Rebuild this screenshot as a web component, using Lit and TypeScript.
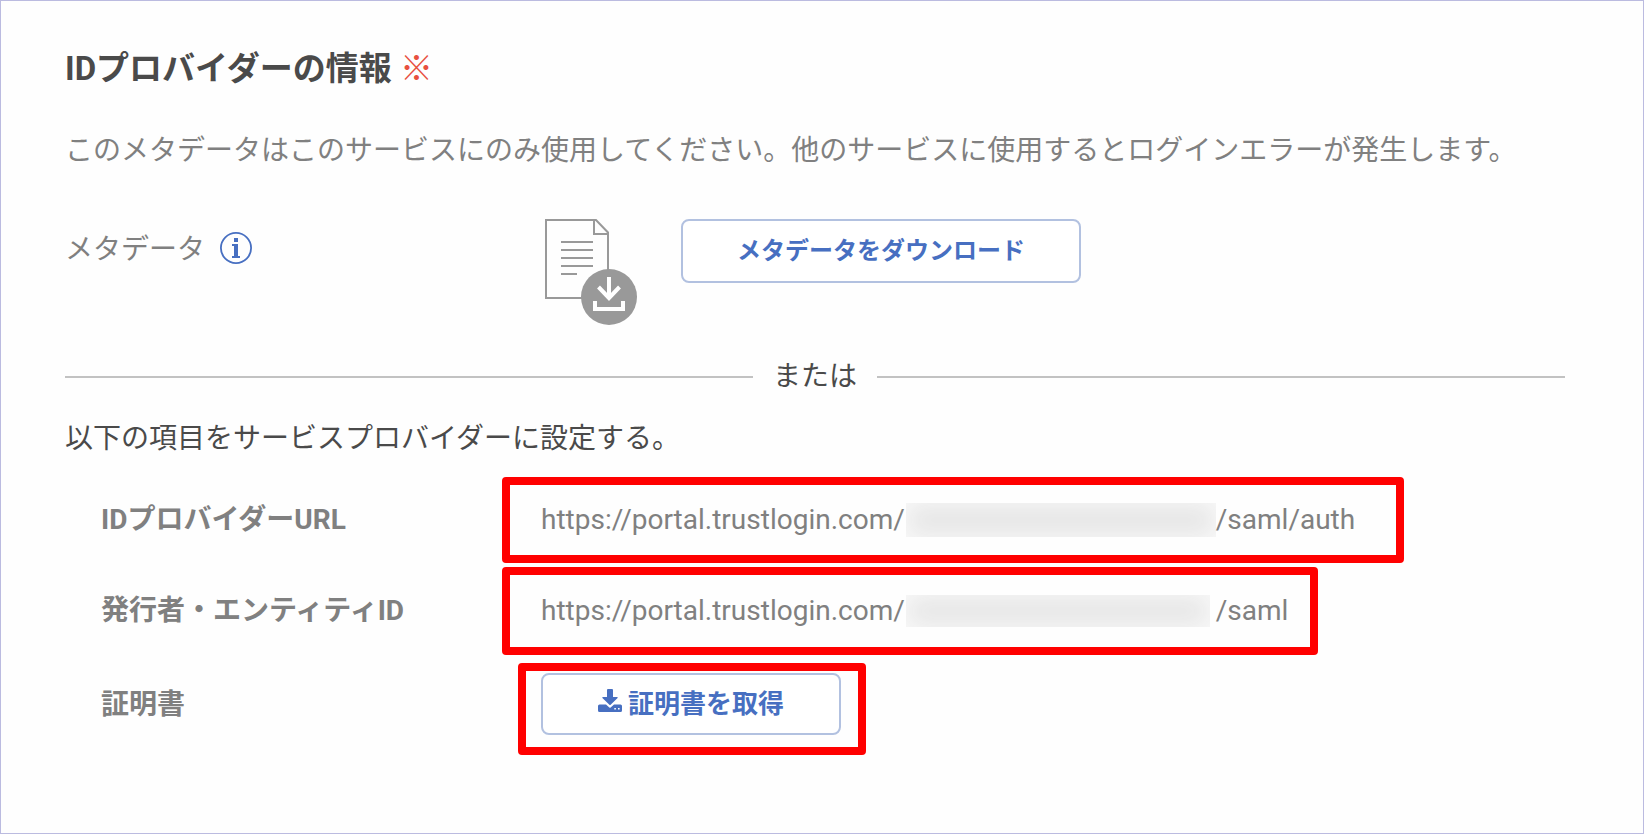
import { LitElement, html, css } from "lit";
import { customElement } from "lit/decorators.js";

const infoIcon = html`<svg width="32" height="32" viewBox="0 0 32 32" aria-hidden="true">
  <circle cx="16" cy="16" r="15.1" fill="none" stroke="#476fc1" stroke-width="1.8" />
  <path fill="#476fc1" d="M14 6h4v4h-4zM12 12h6v12h2v2h-8v-2h2v-10h-2z" />
</svg>`;

const fileIcon = html`<svg width="92" height="106" viewBox="0 0 92 106" aria-hidden="true">
  <g fill="none" stroke="#999" stroke-width="2">
    <path d="M1 1H51L63 13.500V79H1Z" />
    <path d="M49 1V15H63" />
    <path d="M16 23H48M16 31H48M16 39H48M16 47H48M16 55H32" />
  </g>
  <circle cx="64" cy="78" r="28" fill="#999" />
  <path fill="none" stroke="#fff" stroke-width="4" d="M64 58V79M53.500 68L64 79L74.500 68M50 82V90H78V82" />
</svg>`;

const downloadIcon = html`<svg width="24" height="24" viewBox="0 0 24 24" aria-hidden="true">
  <path fill="#476fc1" d="M10 0h4a1 1 0 0 1 1 1v7h4.200a.6.6 0 0 1 .4 1l-7 6.800a.9.9 0 0 1-1.200 0l-7-6.800a.6.6 0 0 1 .4-1H9V1a1 1 0 0 1 1-1z" />
  <path fill="#476fc1" fill-rule="evenodd" d="M1.500 15.500H8l2.500 2.300a2 2 0 0 0 3 0L16 15.500h6.500A1.500 1.500 0 0 1 24 17v4.500a1.500 1.500 0 0 1-1.500 1.500h-21A1.500 1.500 0 0 1 0 21.500V17a1.500 1.500 0 0 1 1.500-1.500zM16.300 19h1.600v1.600h-1.600zM20 19h1.600v1.600H20z" />
</svg>`;

@customElement("app-root")
export class AppRoot extends LitElement {
  static styles = css`
    :host {
      display: block;
      font-family: Roboto, "Noto Sans CJK JP", sans-serif;
      font-size: 28px;
      line-height: 40px;
      color: #808080;
    }
    * {
      box-sizing: border-box;
    }
    .panel {
      min-height: 100vh;
      padding: 44px 78px 40px 64px;
      border: 1px solid #bbbbe0;
      background: #fefefe;
    }
    h2 {
      margin: 0 0 38px;
      font-size: 33px;
      line-height: 48px;
      font-weight: 700;
      color: #4a4a4a;
    }
    .required {
      font-weight: 400;
      color: #e8503f;
    }
    p {
      margin: 0;
    }
    .metadata {
      display: flex;
      align-items: flex-start;
      margin-top: 48px;
    }
    .metadata-label {
      display: flex;
      align-items: center;
      gap: 15px;
      flex: 0 0 480px;
      height: 58px;
      line-height: 58px;
    }
    .metadata-label span {
      padding-top: 4px;
    }
    .info {
      display: flex;
      padding: 0;
      border: 0;
      background: none;
    }
    svg {
      display: block;
      flex: none;
    }
    .action {
      display: inline-flex;
      align-items: center;
      justify-content: center;
      gap: 6px;
      padding: 0 0 6px;
      border: 2px solid #b2c1e0;
      border-radius: 8px;
      background: #fff;
      color: #476fc1;
      font-family: inherit;
      font-weight: 700;
    }
    .download {
      width: 400px;
      height: 64px;
      margin-left: 44px;
      font-size: 24px;
    }
    .certificate {
      width: 300px;
      height: 62px;
      font-size: 26px;
    }
    .or {
      display: flex;
      align-items: center;
      gap: 20px;
      margin: 32px 0 22px;
      color: #4a4a4a;
    }
    .or::before,
    .or::after {
      content: "";
      flex: 1;
      height: 2px;
      background: #c2c2c2;
    }
    .lead {
      color: #4a4a4a;
    }
    dl {
      display: flex;
      flex-direction: column;
      align-items: flex-start;
      gap: 4px;
      margin: 18px 0 0;
      padding-left: 36px;
    }
    .row {
      display: flex;
      align-items: center;
    }
    .row:last-child {
      margin-top: 4px;
    }
    .row:last-child dt {
      padding-bottom: 8px;
    }
    dt {
      flex: 0 0 401px;
      font-weight: 700;
    }
    dd {
      display: flex;
      align-items: center;
      margin: 0;
      padding: 15px 31px;
      border: 8px solid #f00;
      border-radius: 4px;
      white-space: nowrap;
    }
    .url {
      height: 86px;
      padding-right: 41px;
    }
    .entity {
      height: 88px;
      padding-right: 22px;
    }
    .file {
      height: 92px;
      margin-left: 16px;
      padding: 0 17px 10px 15px;
    }
    .hidden-id {
      width: 310px;
      height: 34px;
      margin-left: 1px;
      background: #e5e5e5;
      box-shadow: inset 0 0 24px 2px #fafafa;
    }
    .entity .hidden-id {
      width: 304px;
      height: 32px;
      margin-right: 6px;
    }
  `;

  render() {
    return html`<main class="panel">
      <h2>IDプロバイダーの情報 <span class="required">※</span></h2>
      <p>このメタデータはこのサービスにのみ使用してください。他のサービスに使用するとログインエラーが発生します。</p>
      <div class="metadata">
        <div class="metadata-label">
          <span>メタデータ</span><button class="info" type="button" aria-label="メタデータ">${infoIcon}</button>
        </div>
        ${fileIcon}
        <button class="action download" type="button">メタデータをダウンロード</button>
      </div>
      <div class="or">または</div>
      <p class="lead">以下の項目をサービスプロバイダーに設定する。</p>
      <dl>
        <div class="row">
          <dt>IDプロバイダーURL</dt>
          <dd class="url">https://portal.trustlogin.com/<span class="hidden-id"></span>/saml/auth</dd>
        </div>
        <div class="row">
          <dt>発行者・エンティティID</dt>
          <dd class="entity">https://portal.trustlogin.com/<span class="hidden-id"></span>/saml</dd>
        </div>
        <div class="row">
          <dt>証明書</dt>
          <dd class="file"><button class="action certificate" type="button">${downloadIcon}証明書を取得</button></dd>
        </div>
      </dl>
    </main>`;
  }
}
